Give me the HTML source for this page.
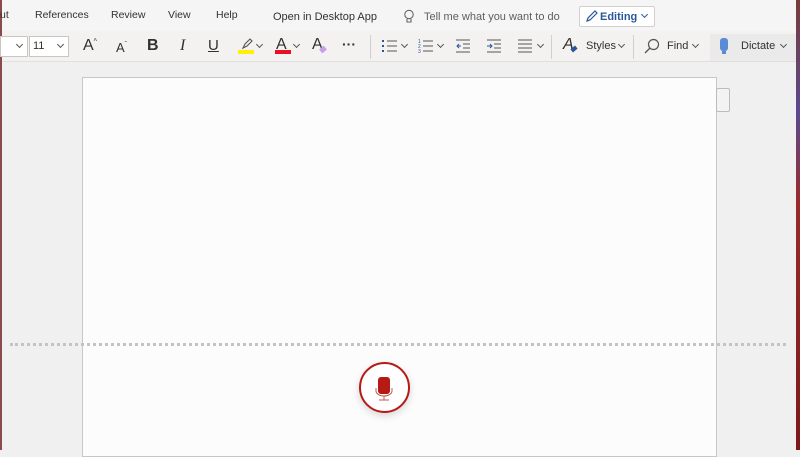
<!DOCTYPE html>
<html><head><style>
*{margin:0;padding:0;box-sizing:border-box}
body{width:800px;height:450px;overflow:hidden;background:#f1f0f1;font-family:"Liberation Sans",sans-serif;position:relative;color:#323130}
.t{position:absolute;font-size:11px;white-space:nowrap}
.m{font-size:10.5px}
.a{position:absolute}
.chev{position:absolute;width:5px;height:5px;border-right:1.2px solid #555;border-bottom:1.2px solid #555;transform:rotate(45deg)}
</style></head><body>
<div class="a" style="left:0;top:0;width:796px;height:31px;background:#f6f5f5"></div>
<div class="a" style="left:0;top:31px;width:796px;height:31px;background:#f3f2f1;border-bottom:1px solid #e1dfdd"></div>
<div class="a" style="left:0;top:0;width:2px;height:450px;background:#8a4a4e"></div>
<div class="a" style="left:796px;top:0;width:4px;height:450px;background:linear-gradient(#7a3a3a,#5a4a90 25%,#9a2a2a 45%,#7a1a1a)"></div>
<div class="t m" style="left:0;top:9px">ut</div>
<div class="t m" style="left:35px;top:9px">References</div>
<div class="t m" style="left:111px;top:9px">Review</div>
<div class="t m" style="left:168px;top:9px">View</div>
<div class="t m" style="left:216px;top:9px">Help</div>
<div class="t" style="left:273px;top:11px">Open in Desktop App</div>
<svg class="a" style="left:403px;top:9px" width="12" height="16"><circle cx="6" cy="5.5" r="4.2" fill="none" stroke="#666" stroke-width="1.1"/><path d="M4 10v3h4v-3" fill="none" stroke="#666" stroke-width="1.1"/></svg>
<div class="t" style="left:424px;top:11px;color:#605e5c">Tell me what you want to do</div>
<div class="a" style="left:579px;top:6px;width:76px;height:21px;border:1px solid #d2d0ce;background:#fff;border-radius:2px"></div>
<svg class="a" style="left:585px;top:10px" width="13" height="13"><path d="M2 11l1-3 7-7 2 2-7 7z" fill="none" stroke="#2b579a" stroke-width="1.2"/></svg>
<div class="t" style="left:600px;top:11px;color:#2b579a;font-weight:bold;font-size:11px">Editing</div>
<div class="chev" style="left:642px;top:12px;border-color:#2b579a"></div>
<!-- row 2 -->
<div class="a" style="left:0;top:36px;width:28px;height:21px;background:#fff;border:1px solid #c8c6c4"></div>
<div class="chev" style="left:17px;top:42px"></div>
<div class="a" style="left:29px;top:36px;width:40px;height:21px;background:#fff;border:1px solid #c8c6c4"></div>
<div class="t" style="left:33px;top:40px">11</div>
<div class="chev" style="left:58px;top:42px"></div>
<div class="t" style="left:83px;top:37px;font-size:16px">A<sup style="font-size:7px">^</sup></div>
<div class="t" style="left:116px;top:40px;font-size:13px">A<sup style="font-size:7px">ˇ</sup></div>
<div class="t" style="left:147px;top:37px;font-size:16px;font-weight:bold">B</div>
<div class="t" style="left:180px;top:37px;font-size:16px;font-style:italic;font-family:'Liberation Serif'">I</div>
<div class="t" style="left:208px;top:37px;font-size:15px;text-decoration:underline">U</div>
<svg class="a" style="left:240px;top:37px" width="14" height="13"><path d="M3 11l2-4 5-5 2 2-5 5z" fill="none" stroke="#555" stroke-width="1.1"/></svg>
<div class="a" style="left:238px;top:50px;width:16px;height:4px;background:#fff100"></div>
<div class="chev" style="left:257px;top:42px"></div>
<div class="t" style="left:276px;top:36px;font-size:16px">A</div>
<div class="a" style="left:275px;top:50px;width:16px;height:4px;background:#e81123"></div>
<div class="chev" style="left:294px;top:42px"></div>
<div class="t" style="left:312px;top:36px;font-size:16px">A</div>
<div class="a" style="left:320px;top:47px;width:6px;height:5px;background:#c6a0e6;transform:rotate(-40deg)"></div>
<div class="t" style="left:342px;top:36px;font-size:14px;font-weight:bold">···</div>
<div class="a" style="left:370px;top:35px;width:1px;height:24px;background:#d2d0ce"></div>
<svg class="a" style="left:382px;top:39px" width="16" height="14"><g fill="#2b579a"><rect x="0" y="1" width="2" height="2"/><rect x="0" y="6" width="2" height="2"/><rect x="0" y="11" width="2" height="2"/></g><g stroke="#555"><path d="M5 2h10M5 7h10M5 12h10"/></g></svg>
<div class="chev" style="left:402px;top:42px"></div>
<svg class="a" style="left:418px;top:39px" width="16" height="14"><g fill="#2b579a" font-size="5" font-family="Liberation Sans"><text x="0" y="4">1</text><text x="0" y="9">2</text><text x="0" y="14">3</text></g><g stroke="#555"><path d="M5 2h10M5 7h10M5 12h10"/></g></svg>
<div class="chev" style="left:438px;top:42px"></div>
<svg class="a" style="left:456px;top:39px" width="14" height="14"><g stroke="#555"><path d="M0 1h14M7 5h7M7 9h7M0 13h14"/></g><path d="M5 7H1M3 5L1 7l2 2" stroke="#2b579a" fill="none"/></svg>
<svg class="a" style="left:487px;top:39px" width="14" height="14"><g stroke="#555"><path d="M0 1h14M7 5h7M7 9h7M0 13h14"/></g><path d="M0 7h5M3 5l2 2-2 2" stroke="#2b579a" fill="none"/></svg>
<svg class="a" style="left:518px;top:39px" width="14" height="14"><g stroke="#555"><path d="M0 1h14M0 5h14M0 9h14M0 13h14"/></g></svg>
<div class="chev" style="left:538px;top:42px"></div>
<div class="a" style="left:551px;top:35px;width:1px;height:24px;background:#d2d0ce"></div>
<div class="t" style="left:563px;top:36px;font-size:16px;font-style:italic">A</div>
<div class="a" style="left:571px;top:47px;width:6px;height:4px;background:#2b579a;transform:rotate(-40deg)"></div>
<div class="t" style="left:586px;top:40px">Styles</div>
<div class="chev" style="left:619px;top:42px"></div>
<div class="a" style="left:633px;top:35px;width:1px;height:24px;background:#d2d0ce"></div>
<svg class="a" style="left:644px;top:38px" width="16" height="16"><circle cx="9.5" cy="6.5" r="5" fill="none" stroke="#555" stroke-width="1.2"/><path d="M6 10l-5 5" stroke="#555" stroke-width="1.3"/></svg>
<div class="t" style="left:667px;top:40px">Find</div>
<div class="chev" style="left:693px;top:42px"></div>
<div class="a" style="left:710px;top:34px;width:86px;height:27px;background:#ebeaea"></div>
<div class="a" style="left:720px;top:38px;width:8px;height:13px;background:#5b8bd4;border-radius:3px"></div>
<div class="a" style="left:722px;top:51px;width:4px;height:3px;background:#5b8bd4"></div>
<div class="t" style="left:741px;top:40px">Dictate</div>
<div class="chev" style="left:781px;top:42px"></div>
<!-- page -->
<div class="a" style="left:82px;top:77px;width:635px;height:380px;background:#fdfcfd;border:1px solid #c8c6c8"></div>
<div class="a" style="left:716px;top:88px;width:14px;height:24px;background:#f4f3f4;border:1px solid #bdbbbd;border-radius:2px"></div>
<div class="a" style="left:10px;top:343px;width:776px;height:0;border-top:3px dotted #c4c2c4"></div>
<div class="a" style="left:359px;top:362px;width:51px;height:51px;border-radius:50%;background:#fff;border:2.5px solid #b51b14;box-shadow:0 3px 8px rgba(0,0,0,.15)"></div>
<div class="a" style="left:378px;top:377px;width:12px;height:17px;background:#b51b14;border-radius:3px"></div>
<svg class="a" style="left:374px;top:388px" width="20" height="14"><path d="M2 0v3a8 5 0 0 0 16 0V0M10 8v4M5 12h10" fill="none" stroke="#c05a55" stroke-width="1"/></svg>
</body></html>
